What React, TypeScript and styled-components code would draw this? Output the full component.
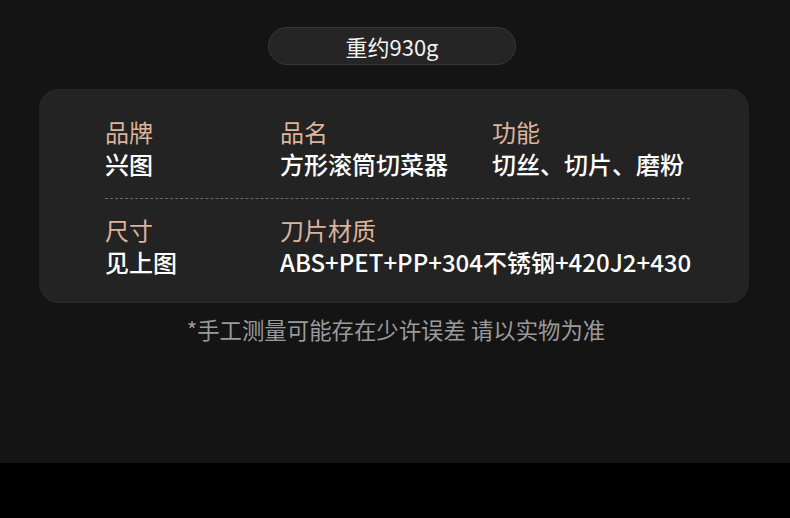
import React from "react";
import styled, { createGlobalStyle } from "styled-components";

const GlobalStyle = createGlobalStyle`
  html, body {
    margin: 0;
    padding: 0;
    background: #000;
  }
  body {
    font-family: "Noto Sans CJK SC", "Noto Sans", sans-serif;
  }
`;

type Spec = { label: string; value: string };

const rowOne: Spec[] = [
  { label: "品牌", value: "兴图" },
  { label: "品名", value: "方形滚筒切菜器" },
  { label: "功能", value: "切丝、切片、磨粉" },
];

const rowTwo: Spec[] = [
  { label: "尺寸", value: "见上图" },
  { label: "刀片材质", value: "ABS+PET+PP+304不锈钢+420J2+430" },
];

const App = () => {
  return (
    <>
      <GlobalStyle />
      <Page>
        <WeightPill>重约930g</WeightPill>
        <SpecCard>
          <SpecRow>
            {rowOne.map((item) => (
              <SpecCell key={item.label}>
                <Label>{item.label}</Label>
                <Value>{item.value}</Value>
              </SpecCell>
            ))}
          </SpecRow>
          <Divider />
          <SpecRow second>
            {rowTwo.map((item, index) => (
              <SpecCell key={item.label} wide={index === 1}>
                <Label>{item.label}</Label>
                <Value>{item.value}</Value>
              </SpecCell>
            ))}
          </SpecRow>
        </SpecCard>
        <Note>*手工测量可能存在少许误差 请以实物为准</Note>
      </Page>
    </>
  );
};

const Page = styled.div`
  height: 463px;
  background: #141414;
  display: flex;
  flex-direction: column;
  align-items: center;
  padding-top: 27px;
  box-sizing: border-box;
`;

const WeightPill = styled.div`
  width: 248px;
  height: 38px;
  box-sizing: border-box;
  border-radius: 19px;
  background: #252525;
  border: 1px solid #363636;
  color: #f2f2f2;
  font-size: 22px;
  line-height: 36px;
  text-align: center;
  margin-right: 6px;
`;

const SpecCard = styled.div`
  margin-top: 24px;
  margin-right: 2px;
  width: 710px;
  box-sizing: border-box;
  padding: 26px 59px 24px 66px;
  border-radius: 20px;
  background: #232323;
  box-shadow: 0 1px 0 #2c2c2c, inset 0 1px 0 #272727;
`;

const SpecRow = styled.div<{ second?: boolean }>`
  display: grid;
  grid-template-columns: 175px 212px 1fr;
  padding-top: ${({ second }) => (second ? "14px" : "0")};
  padding-bottom: ${({ second }) => (second ? "0" : "18px")};
`;

const SpecCell = styled.div<{ wide?: boolean }>`
  display: flex;
  flex-direction: column;
  white-space: nowrap;
  grid-column: ${({ wide }) => (wide ? "span 2" : "auto")};
`;

const Label = styled.div`
  color: #dcb39c;
  font-size: 24px;
  line-height: 33px;
`;

const Value = styled.div`
  color: #ffffff;
  font-size: 24px;
  font-weight: 500;
  line-height: 32px;
`;

const Divider = styled.div`
  height: 0;
  border-top: 1px dashed #6a6a6a;
`;

const Note = styled.div`
  margin-top: 12px;
  margin-right: -2px;
  color: #9a9a9a;
  font-size: 22.4px;
  line-height: 30px;
`;

export default App;
